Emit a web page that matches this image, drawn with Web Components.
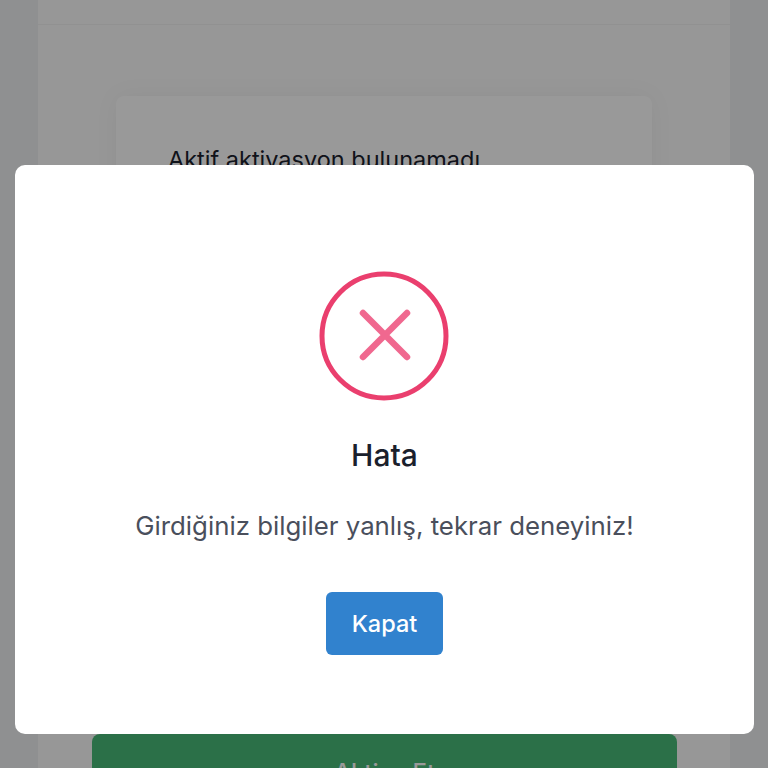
<!DOCTYPE html>
<html lang="tr">
<head>
<meta charset="utf-8">
<title>Aktivasyon</title>
<style>
  html, body { margin: 0; height: 768px; overflow: hidden; background: #eef0f2; }
  body { font-family: Inter, "Liberation Sans", sans-serif; color: #1a202c; }
</style>
</head>
<body>
<template id="activation-page-tpl">
  <style>
    :host { display: block; height: 768px; padding: 0 38px; box-sizing: border-box; overflow: hidden; }
    .wrap { background: #fcfcfc; height: 768px; }
    .top { height: 25px; border-bottom: 1px solid #f2f2f2; box-sizing: border-box; }
    .inner { padding: 71px 53px 0 54px; display: flex; flex-direction: column; }
    .card {
      width: 536px; height: 400px; margin: 0 24px; box-sizing: border-box; padding: 49px 52px;
      background: #fff; border-radius: 8px; box-shadow: 0 0 24px rgba(0,0,0,.05);
    }
    .card p { margin: 0; font-size: 23.5px; line-height: 30px; color: #1a202c; }
    ::slotted(activate-button) { margin-top: 238px; }
  </style>
  <div class="wrap">
    <div class="top"></div>
    <div class="inner">
      <div class="card"><p><slot name="message"></slot></p></div>
      <slot name="action"></slot>
    </div>
  </div>
</template>

<template id="activate-button-tpl">
  <style>
    :host { display: block; width: 585px; }
    button {
      display: block; width: 100%; height: 76px; border: 0; border-radius: 8px; padding: 0;
      background: #48bb78; color: #fff; font: 500 24px Inter, "Liberation Sans", sans-serif;
    }
  </style>
  <button><slot></slot></button>
</template>

<template id="error-modal-tpl">
  <style>
    :host {
      position: fixed; inset: 0; z-index: 10; display: flex; justify-content: center; align-items: flex-start;
      background: rgba(0,0,0,.4);
    }
    .modal {
      margin: 165px 14px 0 15px; width: 739px; height: 569px; box-sizing: border-box; padding-top: 106px;
      background: #fff; border-radius: 10px;
      display: flex; flex-direction: column; align-items: center;
    }
    svg { display: block; width: 130px; height: 130px; margin-left: -2px; }
    h2 { margin: 32px 0 0; font-size: 30px; line-height: 44px; font-weight: 450; color: #1a202c; }
    p { margin: 31px 0 0; font-size: 25.8px; line-height: 36px; color: #4a4f5c; }
    button {
      margin-top: 48px; width: 117px; height: 63px; border: 0; border-radius: 6px;
      background: #3182ce; color: #fff; font: 500 23.5px Inter, "Liberation Sans", sans-serif; padding: 0;
    }
  </style>
  <div class="modal">
    <svg viewBox="0 0 130 130" fill="none" aria-hidden="true">
      <circle cx="65" cy="65" r="62" stroke="#ea3f6e" stroke-width="5"/>
      <path d="M44 42 88 86M88 42 44 86" stroke="#f0688f" stroke-width="6.5" stroke-linecap="round"/>
    </svg>
    <h2><slot name="title"></slot></h2>
    <p><slot name="text"></slot></p>
    <button><slot name="close"></slot></button>
  </div>
</template>

<activation-page>
  <span slot="message">Aktif aktivasyon bulunamadı</span>
  <activate-button slot="action">Aktive Et</activate-button>
</activation-page>
<error-modal>
  <span slot="title">Hata</span>
  <span slot="text">Girdiğiniz bilgiler yanlış, tekrar deneyiniz!</span>
  <span slot="close">Kapat</span>
</error-modal>

<script>
  class TemplateElement extends HTMLElement {
    constructor(id) {
      super();
      const shadow = this.attachShadow({ mode: 'open' });
      shadow.append(document.getElementById(id).content.cloneNode(true));
    }
  }
  class ActivationPage extends TemplateElement {
    constructor() { super('activation-page-tpl'); }
  }
  class ActivateButton extends TemplateElement {
    constructor() { super('activate-button-tpl'); }
  }
  class ErrorModal extends TemplateElement {
    constructor() { super('error-modal-tpl'); }
  }
  customElements.define('activation-page', ActivationPage);
  customElements.define('activate-button', ActivateButton);
  customElements.define('error-modal', ErrorModal);
</script>
</body>
</html>
